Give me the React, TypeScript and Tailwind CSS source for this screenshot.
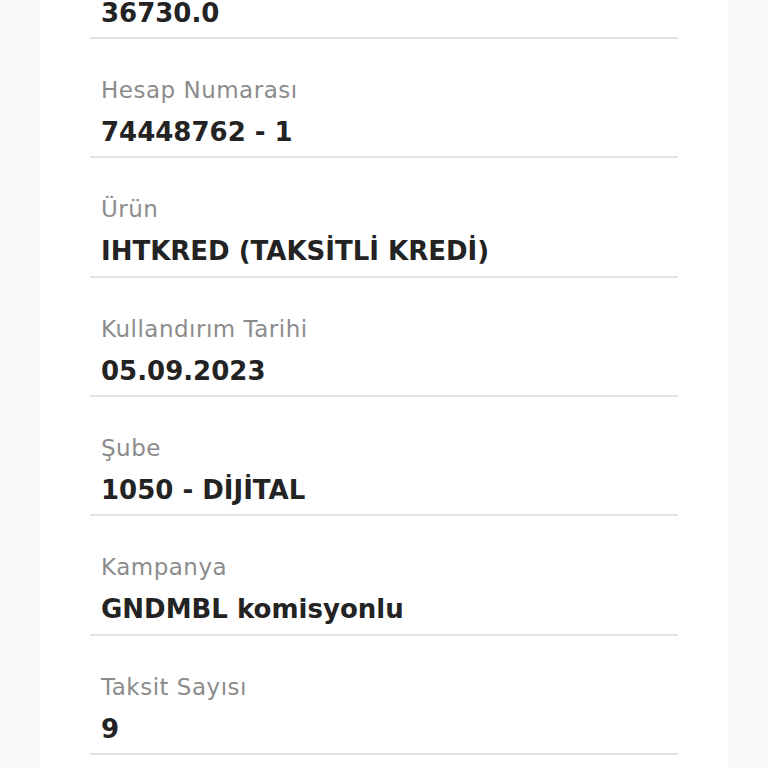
import React from 'react';

interface Row {
  label: string;
  value: string;
}

const rows: Row[] = [
  { label: 'Kredi Tutarı', value: '36730.0' },
  { label: 'Hesap Numarası', value: '74448762 - 1' },
  { label: 'Ürün', value: 'IHTKRED (TAKSİTLİ KREDİ)' },
  { label: 'Kullandırım Tarihi', value: '05.09.2023' },
  { label: 'Şube', value: '1050 - DİJİTAL' },
  { label: 'Kampanya', value: 'GNDMBL komisyonlu' },
  { label: 'Taksit Sayısı', value: '9' },
  { label: 'Vade', value: '9 Ay' },
];

const App: React.FC = () => {
  return (
    <div
      className="h-[768px] overflow-hidden bg-[#f8f8f8] px-[40px]"
      style={{ fontFamily: '"DejaVu Sans", "Noto Sans", sans-serif' }}
    >
      <div className="flex h-full flex-col bg-white px-[50px]">
        <div className="-mt-[80.5px]">
          {rows.map((row) => (
            <div key={row.label} className="h-[119.4px] border-b-2 border-[#e3e3e3] px-[11px] pt-[37px]">
              <p className="text-[23px] leading-[28px] tracking-[0.5px] text-[#8c8c8c]">{row.label}</p>
              <p className="mt-[12px] text-[26px] leading-[32px] font-bold text-[#232323]">{row.value}</p>
            </div>
          ))}
        </div>
      </div>
    </div>
  );
};

export default App;
